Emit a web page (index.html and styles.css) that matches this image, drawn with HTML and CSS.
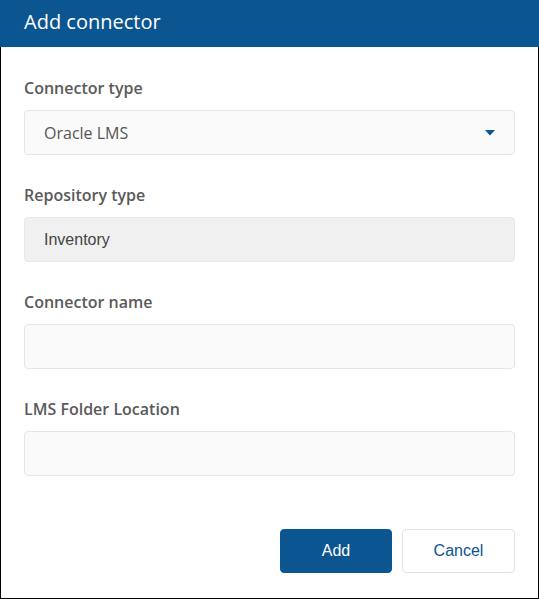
FILE: index.html
```html
<!DOCTYPE html>
<html>
<head>
<meta charset="utf-8">
<link rel="stylesheet" href="styles.css">
</head>
<body>
<div class="dialog">
  <div class="header">Add connector</div>
  <div class="body">
    <div class="field">
      <div class="label">Connector type</div>
      <div class="input select">
        <span class="value">Oracle LMS</span>
        <svg class="caret" width="10" height="6" viewBox="0 0 10 6"><path d="M0 0H10L5 5.5Z" fill="#0b5591"/></svg>
      </div>
    </div>
    <div class="field">
      <div class="label">Repository type</div>
      <div class="input disabled"><span class="value arial">Inventory</span></div>
    </div>
    <div class="field">
      <div class="label">Connector name</div>
      <div class="input"></div>
    </div>
    <div class="field">
      <div class="label">LMS Folder Location</div>
      <div class="input"></div>
    </div>
    <div class="actions">
      <button class="btn primary">Add</button>
      <button class="btn secondary">Cancel</button>
    </div>
  </div>
</div>
</body>
</html>
```
FILE: styles.css
```css
html, body {
  margin: 0;
  padding: 0;
  background: #fff;
}
.dialog {
  width: 539px;
  height: 599px;
  box-sizing: border-box;
  display: flex;
  flex-direction: column;
  font-family: "Open Sans", sans-serif;
}
.header {
  height: 47px;
  background: #0b5591;
  color: #fff;
  font-size: 20px;
  line-height: 43px;
  padding-left: 24px;
  flex: none;
}
.body {
  flex: 1;
  border: 1px solid #000;
  border-top: none;
  padding: 31px 23px 25px 23px;
  display: flex;
  flex-direction: column;
}
.field {
  display: flex;
  flex-direction: column;
  margin-bottom: 30px;
}
.label {
  font-size: 16px;
  font-weight: 600;
  color: #5a5a5a;
  line-height: 20px;
  margin-bottom: 12px;
}
.input {
  height: 45px;
  box-sizing: border-box;
  border: 1px solid #e6e6e6;
  border-radius: 4px;
  background: #fafafa;
  display: flex;
  align-items: center;
  padding: 0 19px;
}
.input.disabled {
  background: #f0f0f0;
  border-color: #e8e8e8;
}
.value {
  font-size: 16px;
  color: #555;
}
.value.arial {
  font-family: "Liberation Sans", Arial, sans-serif;
  color: #444;
}
.select {
  justify-content: space-between;
}
.actions {
  margin-top: auto;
  display: flex;
  justify-content: flex-end;
  gap: 10px;
}
.btn {
  height: 44px;
  border-radius: 4px;
  font-family: "Liberation Sans", Arial, sans-serif;
  font-size: 16px;
  cursor: pointer;
}
.primary {
  width: 112px;
  background: #0b5591;
  border: 1px solid #0b5591;
  color: #fff;
}
.secondary {
  width: 113px;
  background: #fff;
  border: 1px solid #e3e3e3;
  color: #0b5591;
}
```
